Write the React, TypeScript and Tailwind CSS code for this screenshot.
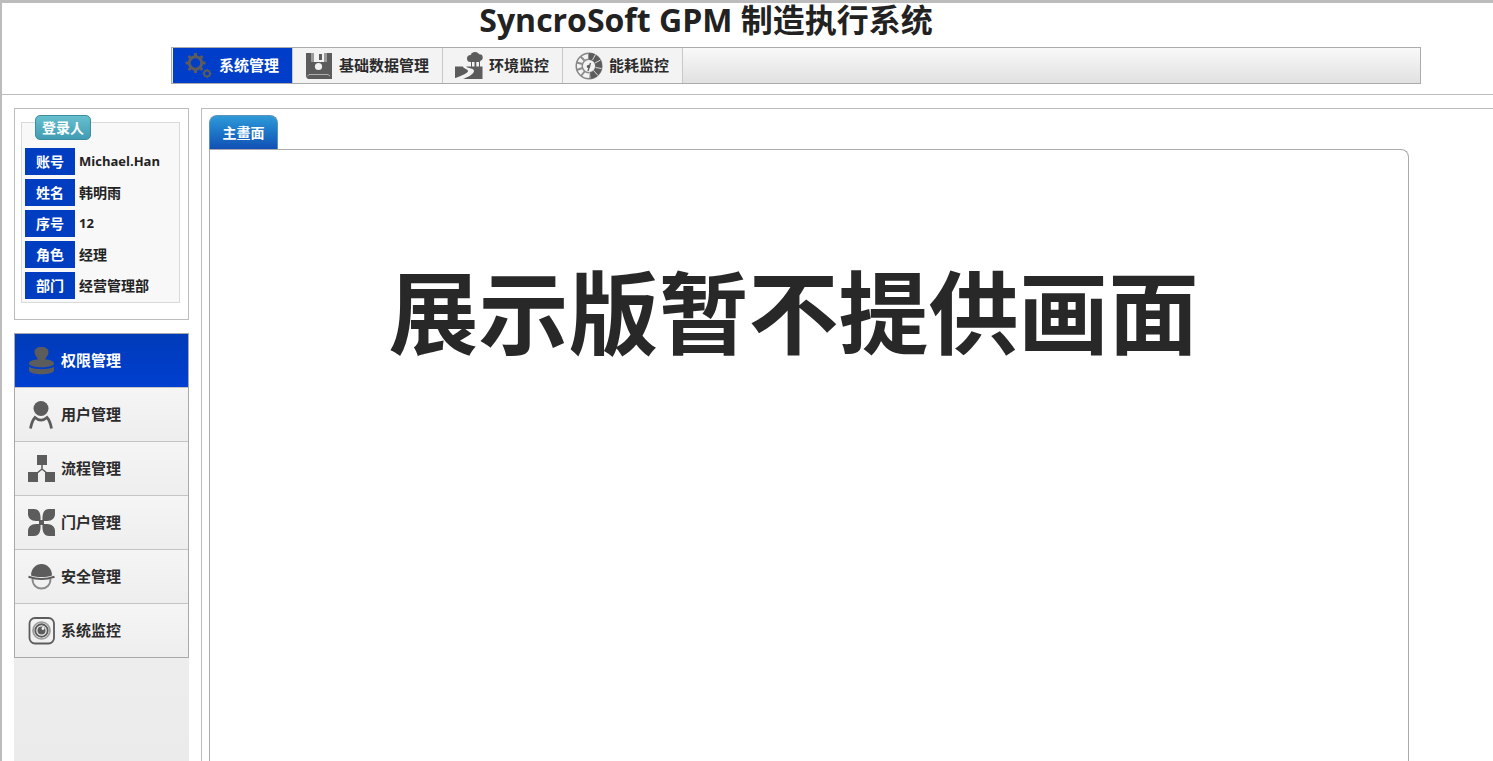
import React, { useState } from "react";

const iconClass = "w-7 h-7 shrink-0 text-[#5c5c5c]";

const GearsIcon = () => (
  <svg className={iconClass} viewBox="0 0 28 28" fill="none" stroke="currentColor">
    <circle cx="10.5" cy="11" r="6.2" strokeWidth="3" />
    <path
      d="M10.500 1v3M10.500 18v3M.5 11h3M17.500 11h3M3.500 4l2 2M15.500 16l2 2M17.500 4l-2 2M5.500 16l-2 2"
      strokeWidth="3"
    />
    <circle cx="22" cy="21.500" r="2.900" strokeWidth="1.800" />
    <path
      d="M22 17v1.500M22 24.500V26M17.500 21.500H19M25 21.500h1.500M19 18.500l1 1M24 23.500l1 1M25 18.500l-1 1M20 23.500l-1 1"
      strokeWidth="1.600"
    />
  </svg>
);

const DiskIcon = () => (
  <svg className={iconClass} viewBox="0 0 28 28" fill="currentColor">
    <path d="M1 1h26v26H3l-2-2z" />
    <path d="M6 1h3v9H6zM19 1h3v9h-3z" fill="#9a9a9a" />
    <path d="M9 1h10v9H9z" fill="#f3f3f3" />
    <path d="M14 2h3v6h-3z" />
    <circle cx="13.500" cy="14.500" r="3.600" fill="#f3f3f3" />
    <path d="M2 24.500l2-2h19l2 1.500" fill="none" stroke="#b0b0b0" strokeWidth="1" />
  </svg>
);

const LandscapeIcon = () => (
  <svg className={iconClass} viewBox="0 0 28 28" fill="currentColor">
    <circle cx="15.500" cy="6.500" r="3.500" />
    <circle cx="20" cy="4.500" r="4.500" />
    <circle cx="24.500" cy="5.500" r="3.200" />
    <path d="M15 7h11l-1 3H15z" />
    <path d="M16 9h1v6h-1zM19.500 9h1.800v6h-1.800zM24 9h1v6h-1z" />
    <path d="M0 14.500h8c0 2 5 2.500 5 4.500s-5 4-12.500 7H0z" />
    <path d="M11 14.500h16.500V27H8c5-2 11-5 11-8s-6-2.500-8-4.500z" />
  </svg>
);

const GaugeIcon = () => (
  <svg className={iconClass} viewBox="0 0 28 28" fill="none" stroke="currentColor">
    <circle cx="14" cy="14" r="12.800" strokeWidth="1.500" stroke="#858585" />
    <circle cx="14" cy="14" r="6.800" strokeWidth="1.500" stroke="#8c8c8c" />
    <path
      d="M14 1v6M1.500 10.500l6 1.500M5.500 4.500l4 4M1.500 18l6-2M6 24l4-5"
      stroke="#8c8c8c"
      strokeWidth="2"
    />
    <path d="M14 4.200a9.800 9.800 0 0 1 0 19.600" strokeWidth="6.500" />
    <path
      d="M17.500 8l3-5.500M20 11l5.500-3M20.500 15.500l6 1M18.500 18.500l4.500 5M14.500 20.500l.5 6"
      stroke="#dcdcdc"
      strokeWidth="1"
    />
    <path d="M15.500 11L13 19" strokeWidth="1.300" />
    <circle cx="13.500" cy="14.500" r="1.700" fill="currentColor" stroke="none" />
  </svg>
);

const StampIcon = () => (
  <svg className={iconClass} viewBox="0 0 28 28" fill="currentColor">
    <path d="M6.500 5C6.500 2 9 0 13.500 0s7 2 7 5c0 3-2 4.500-3 6.500-.5 1.500 0 3 1 4.500h-10c1-1.500 1.500-3 1-4.500C8.500 9.500 6.500 8 6.500 5z" />
    <path d="M8.500 12.500C4 13 1 14.500 1 16.500c0 5 25 5 25 0 0-2-3-3.500-7.500-4z" />
    <path d="M1 19.500c3 3.500 22 3.500 25 0v4c-1 5-24 5-25 0z" />
  </svg>
);

const UserIcon = () => (
  <svg className={iconClass} viewBox="0 0 28 28">
    <circle cx="13" cy="7.500" r="7.500" fill="currentColor" />
    <path
      d="M2.500 27.500C3.500 22 5 18.500 7 16.500c4 3.500 8 3.500 12 0 2 2 3.500 5.500 4.500 11"
      fill="none"
      stroke="currentColor"
      strokeWidth="2.800"
    />
  </svg>
);

const FlowIcon = () => (
  <svg className={iconClass} viewBox="0 0 28 28">
    <path d="M9 0h10v10H9zM0 17h10v10H0zM17 17h10v10H17z" fill="currentColor" />
    <path d="M14 9v5l-6 5M14 14l6 5" fill="none" stroke="currentColor" strokeWidth="1.500" />
  </svg>
);

const PetalsIcon = () => (
  <svg className={iconClass} viewBox="0 0 28 28" fill="currentColor">
    <path d="M0 0h6c5 0 7 4 6.500 12H8C3 12 0 9 0 5z" />
    <path d="M27 0h-6c-5 0-7 4-6.500 12H19c5 0 8-3 8-7z" />
    <path d="M0 27h6c5 0 7-4 6.500-12H8c-5 0-8 3-8 7z" />
    <path d="M27 27h-6c-5 0-7-4-6.500-12H19c5 0 8 3 8 7z" />
    <path d="M11 11h5v5h-5z" />
  </svg>
);

const HelmetIcon = () => (
  <svg className={iconClass} viewBox="0 0 28 28">
    <path d="M3 12.500C3 5.500 8 1 13.500 1S24 5.500 24 12.500c-6 2-15 2-21 0z" fill="currentColor" />
    <path d="M.5 13.800c8 2.800 18 2.800 26 0" fill="none" stroke="currentColor" strokeWidth="2" />
    <path
      d="M4.500 16c0 6 4 9.500 9 9.500s9-3.500 9-9.500"
      fill="none"
      stroke="#8a8a8a"
      strokeWidth="1.900"
    />
  </svg>
);

const CameraIcon = () => (
  <svg className={iconClass} viewBox="0 0 28 28" fill="none" stroke="currentColor">
    <rect x="1.500" y="1" width="24.500" height="25.500" rx="5.500" strokeWidth="1.800" />
    <circle cx="13.500" cy="13.500" r="8.500" stroke="#9a9a9a" strokeWidth="1.700" />
    <circle cx="13.500" cy="13.500" r="6.200" strokeWidth="1.900" />
    <circle cx="13.500" cy="13.500" r="4" fill="currentColor" stroke="none" />
    <circle cx="15" cy="11.500" r="1.400" fill="#f3f3f3" stroke="none" />
  </svg>
);

const navItems = [
  { label: "系统管理", Icon: GearsIcon },
  { label: "基础数据管理", Icon: DiskIcon },
  { label: "环境监控", Icon: LandscapeIcon },
  { label: "能耗监控", Icon: GaugeIcon },
];

const menuItems = [
  { label: "权限管理", Icon: StampIcon },
  { label: "用户管理", Icon: UserIcon },
  { label: "流程管理", Icon: FlowIcon },
  { label: "门户管理", Icon: PetalsIcon },
  { label: "安全管理", Icon: HelmetIcon },
  { label: "系统监控", Icon: CameraIcon },
];

const userInfo = [
  { label: "账号", value: "Michael.Han" },
  { label: "姓名", value: "韩明雨" },
  { label: "序号", value: "12" },
  { label: "角色", value: "经理" },
  { label: "部门", value: "经营管理部" },
];

const Header = () => {
  const [active, setActive] = useState(0);

  return (
    <header className="border-b border-[#bdbdbd] pb-[10px]">
      <h1 className="h-11 pr-[83px] text-center text-[32px] leading-[34px] text-[#222]">
        SyncroSoft GPM 制造执行系统
      </h1>
      <nav className="ml-[169px] mr-[72px] border border-[#ababab] bg-linear-to-b from-[#f9f9f9] to-[#e1e1e1] pl-px">
        <ul className="flex">
          {navItems.map(({ label, Icon }, i) => (
            <li key={label} className="border-r border-[#c8c8c8]">
              <a
                href="#"
                onClick={() => setActive(i)}
                className={`flex h-[35px] items-center gap-[6px] pl-3 pr-[13px] text-[15px] ${
                  i === active ? "bg-[#003dc8] text-white" : "bg-[#f3f3f3] text-[#2b2b2b]"
                }`}
              >
                <Icon />
                {label}
              </a>
            </li>
          ))}
        </ul>
      </nav>
    </header>
  );
};

const LoginBox = () => (
  <section className="border border-[#bdbdbd] px-[6px] pt-[13px] pb-4">
    <div className="mr-[2px] border border-[#d9d9d9] bg-[#f8f8f8] px-[3px] pb-[3px]">
      <h2 className="-mt-2 ml-[10px] h-[25px] w-14 rounded-[5px] border border-[#3f8c9e] bg-linear-to-b from-[#66bfce] to-[#419db4] text-center text-sm leading-[23px] text-white">
        登录人
      </h2>
      <dl className="mt-2 flex flex-col gap-1 text-sm text-[#222]">
        {userInfo.map(({ label, value }) => (
          <div key={label} className="flex h-[27px] items-center gap-1">
            <dt className="w-[50px] bg-[#003dc0] text-center leading-[27px] text-white">{label}</dt>
            <dd className={/^[\w.]+$/.test(value) ? "text-[13px]" : "text-sm"}>{value}</dd>
          </div>
        ))}
      </dl>
    </div>
  </section>
);

const SideMenu = () => {
  const [active, setActive] = useState(0);

  return (
    <nav className="mt-[13px] flex-1 bg-linear-to-b from-[#f3f3f3] to-[#ebebeb]">
      <ul className="border border-[#a9a9a9]">
        {menuItems.map(({ label, Icon }, i) => (
          <li key={label} className="border-b border-[#c4c4c4] last:border-b-0">
            <a
              href="#"
              onClick={() => setActive(i)}
              className={`flex h-[53px] items-center gap-[5px] pl-[13px] text-[15px] ${
                i === active
                  ? "bg-linear-to-b from-[#003bb8] to-[#003fd0] text-white"
                  : "bg-linear-to-b from-[#f5f5f5] to-[#eeeeee] text-[#2b2b2b]"
              }`}
            >
              <Icon />
              {label}
            </a>
          </li>
        ))}
      </ul>
    </nav>
  );
};

const App = () => {
  return (
    <div className="flex min-h-screen flex-col border-l-2 border-t-3 border-[#bcbcbc] bg-white font-bold [font-family:'Open_Sans','Noto_Sans_CJK_SC',sans-serif]">
      <Header />
      <div className="flex flex-1 gap-3 pl-3 pt-[13px]">
        <aside className="flex w-[175px] shrink-0 flex-col">
          <LoginBox />
          <SideMenu />
        </aside>
        <main className="flex flex-1 flex-col border-l border-t border-[#bdbdbd] pl-[7px] pt-[6px]">
          <div className="flex">
            <button className="h-[34px] w-[69px] rounded-t-lg border border-b-0 border-[#5c93b8] bg-linear-to-b from-[#2f9ad8] to-[#134fb5] text-sm text-white">
              主畫面
            </button>
          </div>
          <div className="mr-[84px] flex-1 rounded-tr-lg border border-b-0 border-[#ababab] pr-[31px] pt-[97px]">
            <p className="text-center text-[90px] leading-[130px] text-[#282828]">展示版暂不提供画面</p>
          </div>
        </main>
      </div>
    </div>
  );
};

export default App;
